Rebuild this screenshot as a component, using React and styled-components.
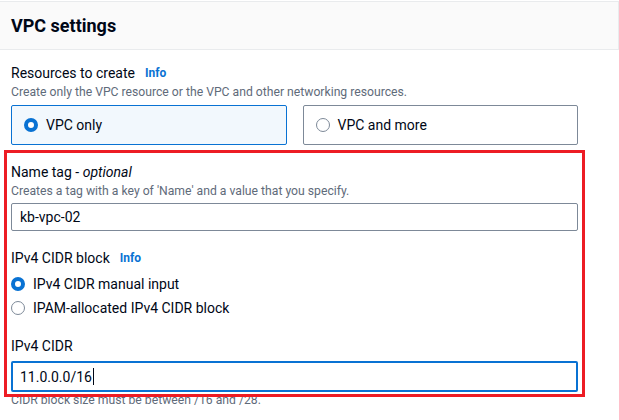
import React from "react";
import styled, { createGlobalStyle } from "styled-components";

const GlobalStyle = createGlobalStyle`
  body {
    margin: 0;
    background: #ffffff;
    font-family: Roboto, "Open Sans", sans-serif;
    color: #000716;
  }
`;

const Page = styled.div`
  position: relative;
  width: 619px;
  height: 420px;
  overflow: hidden;
  padding-top: 1px;
  box-sizing: border-box;
`;

const Header = styled.div`
  height: 47px;
  display: flex;
  align-items: center;
  padding-left: 11px;
  background: #fafafa;
  border-top: 1px solid #e9ebed;
  border-bottom: 1px solid #e9ebed;
  border-right: 1px solid #e9ebed;
`;

const Title = styled.h2`
  margin: 0;
  font-size: 18px;
  font-weight: 700;
  color: #000716;
`;

const Body = styled.div`
  padding: 12px 0 0 11px;
  width: 567px;
  display: flex;
  flex-direction: column;
`;

const Field = styled.div`
  display: flex;
  flex-direction: column;
  margin-bottom: ${(p) => p.$after || 16}px;
`;

const Label = styled.div`
  display: flex;
  align-items: center;
  gap: 10px;
  font-size: 14px;
  line-height: 22px;
  color: #000716;

  em {
    font-style: italic;
  }
`;

const Info = styled.span`
  font-size: 12px;
  font-weight: 700;
  color: #0972d3;
`;

const Hint = styled.div`
  font-size: 12.2px;
  line-height: 16px;
  color: #5f6b7a;
  margin-bottom: ${(p) => p.$after || 0}px;
`;

const Cards = styled.div`
  display: grid;
  grid-template-columns: 1fr 1fr;
  gap: 16px;
`;

const Card = styled.div`
  height: 40px;
  box-sizing: border-box;
  display: flex;
  align-items: center;
  gap: 8px;
  padding-left: 12px;
  border: 1px solid ${(p) => (p.$selected ? "#0972d3" : "#7d8998")};
  border-radius: 2px;
  background: ${(p) => (p.$selected ? "#f2f8fd" : "#ffffff")};
  font-size: 14px;
`;

const Radio = styled.span`
  width: 14px;
  height: 14px;
  box-sizing: border-box;
  border-radius: 50%;
  flex-shrink: 0;
  border: ${(p) => (p.$checked ? "4px solid #0972d3" : "1.5px solid #7d8998")};
  background: #ffffff;
`;

const Options = styled.div`
  display: flex;
  flex-direction: column;
  padding-top: 3px;
`;

const Option = styled.div`
  height: 24px;
  display: flex;
  align-items: center;
  gap: 8px;
  font-size: 14px;
`;

const Input = styled.div`
  height: ${(p) => (p.$focused ? 31 : 28)}px;
  box-sizing: border-box;
  display: flex;
  align-items: center;
  padding-left: ${(p) => (p.$focused ? 7 : 8)}px;
  margin-top: 4px;
  border: ${(p) => (p.$focused ? "2px solid #0972d3" : "1px solid #7d8998")};
  border-radius: 2px;
  font-size: 14px;
  color: #000716;
`;

const Caret = styled.span`
  display: inline-block;
  width: 1px;
  height: 17px;
  background: #000716;
  margin-left: 1px;
`;

const Annotation = styled.div`
  position: absolute;
  left: 4px;
  top: 150px;
  width: 581px;
  height: 247px;
  box-sizing: border-box;
  border: 3px solid #ed1c24;
  pointer-events: none;
`;

export default function App() {
  return (
    <>
      <GlobalStyle />
      <Page>
        <Header>
          <Title>VPC settings</Title>
        </Header>
        <Body>
          <Field>
            <Label>
              Resources to create <Info>Info</Info>
            </Label>
            <Hint $after={5}>
              Create only the VPC resource or the VPC and other networking resources.
            </Hint>
            <Cards>
              <Card $selected>
                <Radio $checked />
                VPC only
              </Card>
              <Card>
                <Radio />
                VPC and more
              </Card>
            </Cards>
          </Field>
          <Field>
            <Label>
              <span>
                Name tag - <em>optional</em>
              </span>
            </Label>
            <Hint>Creates a tag with a key of 'Name' and a value that you specify.</Hint>
            <Input>kb-vpc-02</Input>
          </Field>
          <Field $after={15}>
            <Label>
              IPv4 CIDR block <Info>Info</Info>
            </Label>
            <Options>
              <Option>
                <Radio $checked />
                IPv4 CIDR manual input
              </Option>
              <Option>
                <Radio />
                IPAM-allocated IPv4 CIDR block
              </Option>
            </Options>
          </Field>
          <Field>
            <Label>IPv4 CIDR</Label>
            <Input $focused>
              11.0.0.0/16
              <Caret />
            </Input>
            <Hint>CIDR block size must be between /16 and /28.</Hint>
          </Field>
        </Body>
        <Annotation />
      </Page>
    </>
  );
}
